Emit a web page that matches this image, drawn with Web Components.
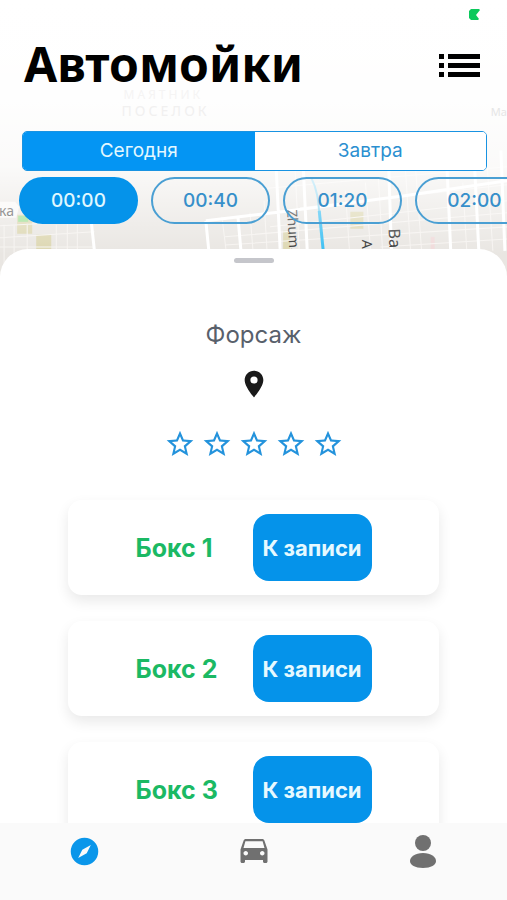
<!DOCTYPE html>
<html lang="ru">
<head>
<meta charset="utf-8">
<meta name="viewport" content="width=device-width, initial-scale=1">
<title>Автомойки</title>
<style>
  body { margin: 0; font-family: Inter, "Noto Sans", sans-serif; background: #fff; }
</style>
</head>
<body>
<wash-app></wash-app>
<script>
const define = (name, html) => {
  const template = document.createElement('template');
  template.innerHTML = html;
  customElements.define(name, class extends HTMLElement {
    constructor() {
      super();
      this.attachShadow({ mode: 'open' }).append(template.content.cloneNode(true));
    }
  });
};

define('city-map', `
<style>
  :host { display: block; overflow: hidden; }
  svg { display: block; width: 100%; height: 100%; }
  text { font-family: "Noto Sans", sans-serif; }
</style>
<svg viewBox="0 0 507 276" preserveAspectRatio="xMidYMin slice" aria-hidden="true">
  <defs>
    <linearGradient id="fade" x1="0" y1="0" x2="0" y2="1">
      <stop offset="0" stop-color="#fff"/>
      <stop offset=".35" stop-color="#fff" stop-opacity=".97"/>
      <stop offset=".6" stop-color="#fff" stop-opacity=".8"/>
      <stop offset=".78" stop-color="#fff" stop-opacity=".35"/>
      <stop offset=".92" stop-color="#fff" stop-opacity="0"/>
    </linearGradient>
  </defs>
  <rect width="507" height="276" fill="#e9e6e2"/>
  <g fill="#dcd6b0">
    <path d="M18 214h15v19H18zM37 234h15v17H37z"/>
    <path d="M350 211h13v17h-13zM283 230h7v19h-7z"/>
  </g>
  <path d="M19 215h10v6H19z" fill="#9ddf93"/>
  <path d="M430 236h4v13h-4z" fill="#f0dada"/>
  <g fill="none" stroke="#f6f3f0" stroke-width="1">
    <path d="M0 237l95-6M0 225l95-5M5 224v50M15 225v50M28 223v40M57 224v30M68 222v30M78 220v30M0 246h95"/>
    <path d="M225 236l282-24M225 244l282-18M270 226l237-26M262 188l245-22M300 207l207-23M380 246l127-8"/>
    <path d="M222 216l4 32M250 212l3 38M264 200l3 50M295 170l4 78M345 190l4 58M365 182l5 66M378 178l4 70M405 170l5 80M415 168l6 82M462 182l4 68M486 160l6 90"/>
  </g>
  <g fill="none" stroke="#fff" stroke-width="3">
    <path d="M206 220l76-9 122-16 103-15M206 220l3 30M238 216l3 34M92 222l3 28M276 165l4 83M303 165l4 84M388 160l3 90M446 160l4 90M474 170l4 80M500 150l4 100"/>
  </g>
  <path d="M0 201h16l4 5-3 11H0z" fill="#fff" opacity=".7"/>
  <path d="M311 177c6 12 7 22 8 35" fill="none" stroke="#7dd0f0" stroke-width="2"/>
  <path d="M319 210l4 40" fill="none" stroke="#35bdf2" stroke-width="3"/>
  <text x="0" y="215" font-size="14" fill="#555">ка</text>
  <g fill="#333">
    <text transform="translate(287 209) rotate(87)" font-size="14">Zhuma</text>
    <text transform="translate(362 239) rotate(90)" font-size="14">A</text>
    <text transform="translate(388 228) rotate(87)" font-size="16">Ba</text>
  </g>
  <rect width="507" height="276" fill="url(#fade)"/>
  <g fill="#f5f4f4" letter-spacing="3">
    <text x="124" y="99" font-size="12">МАЯТНИК</text><text x="122" y="116" font-size="14" fill="#f1f0f0">ПОСЕЛОК</text>
  </g>
  <text x="490" y="116" font-size="11" fill="#e6e6e6">Ма</text>
</svg>`);

define('page-header', `
<style>
  :host { display: block; }
  .status { display: flex; justify-content: flex-end; padding: 9px 27px 0; }
  .status svg { display: block; width: 11px; height: 11px; }
  .row { display: flex; justify-content: space-between; align-items: center; padding: 10px 27px 0 24px; height: 72px; }
  h1 { margin: 0 0 4px; font: bold 48px/48px "Noto Sans", sans-serif; color: #000; }
  button { border: 0; padding: 0; background: none; }
  button svg { display: block; width: 41px; height: 24px; }
</style>
<div class="status"><svg viewBox="0 0 11 11" aria-hidden="true"><path d="M2 0h8l1 1-4 5 3 4-1 1H2L0 9V2z" fill="#0bc95c"/></svg></div>
<div class="row">
  <h1><slot></slot></h1>
  <button aria-label="Список"><svg viewBox="0 0 41 24"><path d="M0 0h5v5H0zM9 0h32v5H9zM0 9h5v5H0zM9 9h32v5H9zM0 18h5v5H0zM9 18h32v5H9z"/></svg></button>
</div>`);

define('day-switch', `
<style>
  :host { display: flex; box-sizing: border-box; height: 40px; border: 1px solid #1993e2; border-radius: 5px; overflow: hidden; background: #fff; }
  button { flex: 1; border: 0; padding: 0; background: #fff; color: #2a8fd0; font: 400 19px/38px Inter, sans-serif; }
  button[aria-pressed=true] { background: #0495f3; color: #e3f8ff; }
</style>
<button aria-pressed="true">Сегодня</button><button aria-pressed="false">Завтра</button>`);

define('time-slot', `
<style>
  :host { display: block; flex: none; width: 119px; }
  button { box-sizing: border-box; width: 100%; height: 47px; padding: 0; border: 2px solid #4a9fd3; border-radius: 24px; background: none; color: #368fca; font: 500 19px/43px Inter, sans-serif; }
  :host([selected]) button { background: #0593ea; border-color: #0593ea; color: #e0f8ff; }
</style>
<button><slot></slot></button>`);

define('star-rating', `
<style>
  :host { display: flex; justify-content: center; gap: 5px; }
  button { border: 0; padding: 0; background: none; }
  svg { display: block; width: 32px; height: 32px; fill: #2493dc; }
</style>
${[1, 2, 3, 4, 5].map(n => `<button aria-label="Оценка ${n}"><svg viewBox="0 0 24 24"><path d="M22 9.24l-7.19-.62L12 2 9.19 8.63 2 9.24l5.46 4.73L5.82 21 12 17.27 18.18 21l-1.63-7.03L22 9.24zM12 15.4l-3.76 2.27 1-4.28-3.32-2.88 4.38-.38L12 6.1l1.71 4.04 4.38.38-3.32 2.88 1 4.28L12 15.4z"/></svg></button>`).join('')}`);

define('box-card', `
<style>
  :host { display: flex; justify-content: center; align-items: center; box-sizing: border-box; min-height: 95px; border-radius: 14px; background: #fff; box-shadow: 0 6px 14px rgba(0,0,0,.09); }
  .name { width: 117px; color: #1bb964; font-weight: 700; font-size: 25px; line-height: 32px; white-space: nowrap; }
  button { width: 119px; height: 67px; border: 0; padding: 0; border-radius: 16px; background: #0593ea; color: #e6f9ff; font: 700 22px/28px Inter, sans-serif; white-space: nowrap; }
</style>
<span class="name"><slot></slot></span><button>К записи</button>`);

define('wash-sheet', `
<style>
  :host { display: flex; flex-direction: column; background: #fff; border-radius: 28px 28px 0 0; overflow: hidden; }
  .grip { width: 40px; height: 5px; margin: 9px auto 0; border-radius: 3px; background: #c5c6cb; flex: none; }
  h2 { margin: 56px 0 0; text-align: center; font-weight: 400; font-size: 24px; line-height: 32px; color: #58606b; }
  .pin { display: block; width: 32px; height: 32px; margin: 17px auto 0; fill: #1a1a1a; flex: none; }
  star-rating { margin-top: 28px; }
  .boxes { display: flex; flex-direction: column; gap: 26px; padding: 40px 68px 0; }
</style>
<div class="grip"></div>
<h2>Форсаж</h2>
<svg class="pin" viewBox="0 0 24 24" aria-hidden="true"><path fill-rule="evenodd" d="M12 2C8.130 2 5 5.130 5 9c0 5.250 7 13 7 13s7-7.750 7-13c0-3.870-3.130-7-7-7zm0 9.700a2.700 2.700 0 1 1 0-5.400 2.700 2.700 0 0 1 0 5.400z"/></svg>
<star-rating></star-rating>
<div class="boxes"><box-card>Бокс 1</box-card><box-card>Бокс 2</box-card><box-card>Бокс 3</box-card></div>`);

define('tab-bar', `
<style>
  :host { display: block; background: #fafafa; }
  nav { display: flex; padding: 10px 0 31px; }
  a { flex: 1; display: flex; justify-content: center; align-items: center; height: 36px; color: #707070; }
  a[aria-current] { color: #0a96ea; }
  svg { display: block; width: 36px; height: 36px; fill: currentColor; }
  a[aria-current] svg { width: 33px; height: 33px; }
</style>
<nav>
  <a href="#map" aria-current="page" aria-label="Карта"><svg viewBox="0 0 24 24"><path fill-rule="evenodd" d="M12 2a10 10 0 1 0 0 20 10 10 0 0 0 0-20zM16.600 7.200L13.600 13.200 7.400 16.800 10.400 10.700z"/></svg></a>
  <a href="#car" aria-label="Машина"><svg viewBox="0 0 24 24"><path d="M18.920 5.010C18.720 4.420 18.160 4 17.500 4h-11c-.66 0-1.210.42-1.420 1.010L3 11v8c0 .55.45 1 1 1h1c.55 0 1-.45 1-1v-1h12v1c0 .55.45 1 1 1h1c.55 0 1-.45 1-1v-8l-2.080-5.990zM6.500 15c-.83 0-1.500-.67-1.500-1.500S5.670 12 6.500 12s1.500.67 1.500 1.500S7.330 15 6.500 15zm11 0c-.83 0-1.500-.67-1.500-1.500s.67-1.500 1.500-1.500 1.500.67 1.500 1.500-.67 1.500-1.500 1.500zM5 10l1.270-4.500h11.460L19 10H5z"/></svg></a>
  <a href="#profile" aria-label="Профиль"><svg viewBox="0 0 36 36"><circle cx="18" cy="10" r="8"/><path d="M18 20c8 0 13 4 13 8s-5 7-13 7-13-3-13-7 5-8 13-8z"/></svg></a>
</nav>`);

define('wash-app', `
<style>
  :host { display: flex; flex-direction: column; height: 100vh; overflow: hidden; }
  .top { position: relative; flex: none; padding-bottom: 53px; overflow: hidden; }
  city-map { position: absolute; inset: 0; }
  .front { position: relative; }
  day-switch { margin: 29px 20px 0 22px; }
  .slots { display: flex; gap: 13px; padding: 6px 0 0 19px; overflow: hidden; }
  wash-sheet { position: relative; flex: 1 1 0; min-height: 0; margin-top: -28px; }
  tab-bar { position: relative; flex: none; }
</style>
<div class="top">
  <city-map></city-map>
  <div class="front">
    <page-header>Автомойки</page-header>
    <day-switch></day-switch>
    <div class="slots"><time-slot selected>00:00</time-slot><time-slot>00:40</time-slot><time-slot>01:20</time-slot><time-slot>02:00</time-slot></div>
  </div>
</div>
<wash-sheet></wash-sheet>
<tab-bar></tab-bar>`);
</script>
</body>
</html>
